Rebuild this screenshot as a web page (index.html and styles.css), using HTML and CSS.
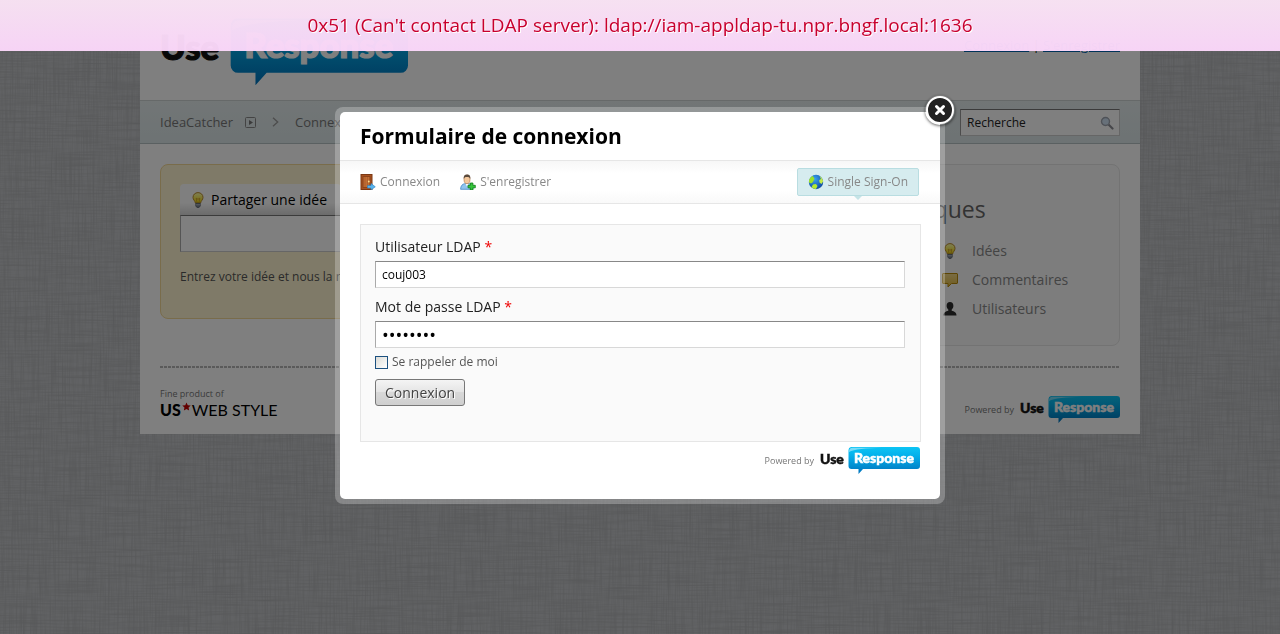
FILE: index.html
```html
<!DOCTYPE html>
<html lang="fr">
  <head>
    <meta charset="utf-8">
    <title>Formulaire de connexion</title>
    <link rel="stylesheet" href="styles.css">
  </head>
  <body>
    <!-- shared shapes -->
    <svg class="sprite" aria-hidden="true">
      <defs>
        <linearGradient id="bubble" x1="0" y1="0" x2="0" y2="1">
          <stop offset="0" stop-color="#0cc4f4"/>
          <stop offset="0.3" stop-color="#04b2ec"/>
          <stop offset="1" stop-color="#0072bc"/>
        </linearGradient>
        <linearGradient id="glass" x1="0" y1="0" x2="0" y2="1">
          <stop offset="0" stop-color="#ffffb0"/>
          <stop offset="1" stop-color="#f0d800"/>
        </linearGradient>
        <linearGradient id="note" x1="0" y1="0" x2="0" y2="1">
          <stop offset="0" stop-color="#f3d98a"/>
          <stop offset="1" stop-color="#e2b93c"/>
        </linearGradient>
        <radialGradient id="sea" cx="0.4" cy="0.3" r="0.8">
          <stop offset="0" stop-color="#3aa4f0"/>
          <stop offset="1" stop-color="#0a3f98"/>
        </radialGradient>
        <filter id="weave-x" x="0" y="0" width="100%" height="100%">
          <feTurbulence type="fractalNoise" baseFrequency="0.02 0.6" numOctaves="3" seed="3"/>
          <feColorMatrix values="0 0 0 0 0  0 0 0 0 0  0 0 0 0 0  1.6 0 0 0 -0.6"/>
        </filter>
        <filter id="weave-y" x="0" y="0" width="100%" height="100%">
          <feTurbulence type="fractalNoise" baseFrequency="0.6 0.02" numOctaves="3" seed="8"/>
          <feColorMatrix values="0 0 0 0 0  0 0 0 0 0  0 0 0 0 0  1.6 0 0 0 -0.6"/>
        </filter>
      </defs>
      <symbol id="logo-bubble" viewBox="0 0 100 28">
        <path d="M31 0H97a3 3 0 0 1 3 3V19a3 3 0 0 1-3 3H43L38.500 27V22H31.500a3 3 0 0 1-3-3V3a3 3 0 0 1 2.500-3z" fill="url(#bubble)"/>
        <path d="M29 5C29 2 30 .7 33 .7H62C46 1 34 2 29 5z" fill="#fff" opacity=".45"/>
      </symbol>
      <symbol id="bulb" viewBox="0 0 16 16">
        <path d="M8 .6C5 .6 3 2.800 3 5.400c0 2.300 2 3.400 2.400 5.600h5.200C11 8.800 13 7.700 13 5.400 13 2.800 11 .6 8 .6z" fill="url(#glass)" stroke="#b98a2c"/>
        <path d="M7 10.500L6.200 6.200 8 7.300l1.800-1.100L9 10.500" fill="none" stroke="#c9952a" stroke-width=".8"/>
        <path d="M5.700 11.300h4.600v2.600L9 15.600H7L5.700 13.900z" fill="#77808c" stroke="#444b55" stroke-width=".6"/>
        <path d="M5.700 12.800h4.600" stroke="#d5d9df" stroke-width=".7"/>
      </symbol>
    </svg>

    <svg class="weave" aria-hidden="true">
      <rect width="100%" height="100%" filter="url(#weave-x)"/>
      <rect width="100%" height="100%" filter="url(#weave-y)"/>
    </svg>

    <div class="page">
      <div class="header">
        <svg class="logo logo-big" viewBox="0 0 100 28">
          <use href="#logo-bubble"/>
          <text class="logo-use" x="0" y="17">Use</text>
          <text class="logo-response" x="64" y="16" text-anchor="middle">Response</text>
        </svg>
        <div class="account">
          <a href="#">Connexion</a> | <a href="#">S'enregistrer</a>
        </div>
      </div>

      <div class="crumbs">
        <a href="#">IdeaCatcher</a>
        <svg class="crumb-menu" viewBox="0 0 11 11"><rect x=".5" y=".5" width="10" height="10" rx="1" fill="none" stroke="#888"/><path d="M4 3l4 2.500L4 8z" fill="#777"/></svg>
        <svg class="crumb-arrow" viewBox="0 0 7 10"><path d="M1 .7L5.700 5 1 9.300" fill="none" stroke="#999" stroke-width="1.300"/></svg>
        <span>Connexion</span>
        <form class="search">
          <input type="text" value="Recherche" aria-label="Recherche">
          <svg viewBox="0 0 14 14"><path d="M8.500 8.500L12.500 12.500" stroke="#8c8c94" stroke-width="2.200" stroke-linecap="round"/><circle cx="5.500" cy="5.500" r="4" fill="#cfe0f2" stroke="#9fa5b0" stroke-width="1.400"/></svg>
        </form>
      </div>

      <div class="content">
        <div class="share">
          <div class="share-tab"><svg><use href="#bulb"/></svg>Partager une idée</div>
          <input type="text" class="share-input" aria-label="Partager une idée">
          <p>Entrez votre idée et nous la rechercherons</p>
        </div>
        <div class="stats">
          <h2>Statistiques</h2>
          <ul>
            <li><svg viewBox="0 0 16 16"><use href="#bulb"/></svg>Idées</li>
            <li><svg viewBox="0 0 16 16"><path d="M1 1.500h14a.6.6 0 0 1 .5.500v9a.6.6 0 0 1-.5.500H9.500L6 15v-3.500H1a.6.6 0 0 1-.5-.5V2a.6.6 0 0 1 .5-.5z" fill="url(#note)" stroke="#b98a08"/></svg>Commentaires</li>
            <li><svg viewBox="0 0 16 16"><path d="M8 1C5.800 1 4.600 2.600 4.600 4.700c0 1.800.8 3 1.700 3.800v1.300C3.800 10.500 1.500 11.500 1.500 14.600h13c0-3.100-2.300-4.100-4.800-4.800V8.500c.9-.8 1.700-2 1.700-3.800C11.400 2.600 10.200 1 8 1z" fill="#2c2c2c"/></svg>Utilisateurs</li>
          </ul>
        </div>
      </div>

      <div class="footer">
        <div class="maker">
          <span>Fine product of</span>
          <div class="maker-name"><b>US</b><svg viewBox="0 0 10 10"><path d="M5 .5l1.400 3 3.300.4-2.400 2.200.6 3.300L5 7.800 2.100 9.400l.6-3.300L.3 3.900l3.300-.4z" fill="#c40000"/></svg>WEB STYLE</div>
        </div>
        <div class="powered">Powered by
          <svg class="logo" viewBox="0 0 100 28">
            <use href="#logo-bubble"/>
            <text class="logo-use" x="0" y="17">Use</text>
            <text class="logo-response" x="64" y="16" text-anchor="middle">Response</text>
          </svg>
        </div>
      </div>
    </div>

    <div class="overlay"></div>

    <div class="modal">
      <button type="button" class="modal-close" aria-label="Fermer"><svg viewBox="0 0 30 30"><circle cx="15" cy="15" r="13" fill="#222" stroke="#fff" stroke-width="2"/><path d="M11.500 11.500l7 7M18.500 11.500l-7 7" stroke="#fff" stroke-width="3" stroke-linecap="round"/></svg></button>
      <div class="modal-body">
        <h1>Formulaire de connexion</h1>
        <div class="tabs">
          <a href="#"><svg viewBox="0 0 16 16"><rect x="1" y=".5" width="11" height="15" fill="#a85220" stroke="#7c3813"/><rect x="3" y="2.500" width="7" height="11" fill="#c06f35" stroke="#8c431a"/><path d="M5 3v10M7.500 3v10" stroke="#a9582a" stroke-width=".7"/><circle cx="8.800" cy="7.500" r=".9" fill="#ffe08a"/><path d="M7.500 11.500h3.500V9.500l4.300 3.300L11 16v-2H7.500z" fill="#58b4ee" stroke="#2a7fc0" stroke-width=".6"/></svg>Connexion</a>
          <a href="#"><svg viewBox="0 0 16 16"><path d="M.6 15.300c0-3.600 2-5.300 4-5.600h5c2 .3 3.400 2 3.400 5.600z" fill="#8fc3ee" stroke="#3f86c4" stroke-width=".8"/><path d="M5.500 9.700L7 12.500l1.700-2.800z" fill="#fff"/><ellipse cx="7" cy="5.400" rx="3" ry="4.300" fill="#f3c79b" stroke="#a9703f" stroke-width=".6"/><path d="M3.800 5C3.300 1.800 4.600.4 7 .4s3.800 1.300 3.200 4.600C9.700 3.400 9 3 7 3S4.300 3.400 3.800 5z" fill="#5b4a3c"/><path d="M10.300 9h2.600v2.300h2.400v2.500h-2.400V16h-2.600v-2.200H8v-2.500h2.300z" fill="#35c63a" stroke="#0f7a18" stroke-width=".8"/></svg>S'enregistrer</a>
          <a href="#" class="sso"><svg viewBox="0 0 16 16"><circle cx="8" cy="8" r="7.200" fill="url(#sea)"/><path d="M1 6C2 3.800 3.500 2.500 4.800 2L6.500 4.500 5.500 7 4.500 8.500 3 9.500 1 8.500z" fill="#9be02c"/><path d="M5 10.500l3-.5 1.500 2-1.500 3C6 15 4.500 14.200 3.600 13z" fill="#b4ea30"/><path d="M11.500 2c2 1.200 3.300 3 3.600 5.500L13.500 10l-2-1.500-.3-2.500L13 5z" fill="#c4ec48"/></svg>Single Sign-On</a>
        </div>
        <form class="login">
          <label for="login">Utilisateur LDAP <em>*</em></label>
          <input type="text" id="login" value="couj003">
          <label for="password">Mot de passe LDAP <em>*</em></label>
          <input type="password" id="password" value="password">
          <div class="remember">
            <input type="checkbox" id="remember">
            <label for="remember">Se rappeler de moi</label>
          </div>
          <button type="submit">Connexion</button>
        </form>
        <div class="powered">Powered by
          <svg class="logo" viewBox="0 0 100 28">
            <use href="#logo-bubble"/>
            <text class="logo-use" x="0" y="17">Use</text>
            <text class="logo-response" x="64" y="16" text-anchor="middle">Response</text>
          </svg>
        </div>
      </div>
    </div>

    <div class="message" role="alert">0x51 (Can't contact LDAP server): ldap://iam-appldap-tu.npr.bngf.local:1636</div>
  </body>
</html>
```

FILE: styles.css
```css
* {
  box-sizing: border-box;
}
body {
  margin: 0;
  min-height: 100vh;
  background: #c3c5c8;
  color: #555;
  font: 13px/18px "Trebuchet MS", "Open Sans", sans-serif;
}
h1, h2, p, ul {
  margin: 0;
  padding: 0;
}
ul {
  list-style-type: none;
}
input, button {
  font: inherit;
}
.sprite {
  position: absolute;
  width: 0;
  height: 0;
}
.weave {
  position: fixed;
  top: 0;
  left: 0;
  width: 100%;
  height: 100%;
  opacity: 0.1;
}

/* page */
.page {
  position: relative;
  max-width: 1000px;
  margin: 0 auto;
  background: #fff;
}
.header {
  display: flex;
  justify-content: space-between;
  align-items: flex-start;
  height: 100px;
  padding: 18px 20px 0;
}
.logo {
  width: 100px;
  height: 28px;
}
.logo-big {
  width: 248px;
  height: 70px;
}
.logo-use,
.logo-response {
  font-family: Lato, sans-serif;
  font-size: 14px;
  font-weight: 900;
  stroke-width: 0.5px;
}
.logo-use {
  fill: #111;
  stroke: #111;
}
.logo-response {
  fill: #fff;
  stroke: #fff;
}
.account {
  padding-top: 18px;
  color: #000;
}
.account a {
  color: #0066b3;
}
.crumbs {
  display: flex;
  align-items: center;
  height: 44px;
  padding: 0 20px;
  border-top: 1px solid #ccd2d3;
  border-bottom: 1px solid #b5c0c2;
  background: linear-gradient(#e4eced, #dbe6e8);
}
.crumbs a,
.crumbs span {
  color: #777;
  text-decoration: none;
}
.crumb-menu {
  width: 11px;
  height: 11px;
  margin: 0 16px 0 12px;
}
.crumb-arrow {
  width: 7px;
  height: 10px;
  margin-right: 16px;
}
.search {
  position: relative;
  margin-left: auto;
}
.search input {
  display: block;
  width: 160px;
  height: 27px;
  padding: 0 28px 0 6px;
  border: 1px solid #ccc;
  border-top-color: #777;
  border-left-color: #999;
  background: #fff;
  color: #222;
  font-size: 12px;
}
.search svg {
  position: absolute;
  top: 7px;
  right: 6px;
  width: 14px;
  height: 14px;
}
.content {
  display: flex;
  align-items: flex-start;
  gap: 20px;
  padding: 20px;
}
.share {
  flex: 1;
  height: 155px;
  padding: 19px;
  border: 1px solid #f3d896;
  border-radius: 8px;
  background: #fff5d0;
}
.share-tab {
  display: inline-flex;
  align-items: center;
  height: 31px;
  padding: 0 14px 0 10px;
  border-radius: 4px 4px 0 0;
  background: linear-gradient(#fff 60%, #d8d8d8);
  color: #000;
  font-size: 14px;
}
.share-tab svg {
  width: 16px;
  height: 16px;
  margin-right: 5px;
}
.share-input {
  display: block;
  width: 100%;
  height: 37px;
  border: 1px solid #ccc;
  border-top-color: #777;
  border-left-color: #aaa;
  background: #fff;
}
.share p {
  padding-top: 16px;
  font-size: 12px;
}
.stats {
  width: 280px;
  height: 182px;
  padding: 30px 20px;
  border: 1px solid #e6e6e6;
  border-radius: 8px;
  background: #fafafa;
}
.stats h2 {
  color: #666;
  font-size: 23px;
  font-weight: normal;
  line-height: 28px;
}
.stats ul {
  padding: 13px 0 0 81px;
}
.stats li {
  display: flex;
  align-items: center;
  height: 29px;
  color: #888;
  font-size: 14px;
}
.stats li svg {
  width: 16px;
  height: 16px;
  margin-right: 14px;
}
.footer {
  display: flex;
  justify-content: space-between;
  align-items: flex-start;
  height: 68px;
  margin: 0 20px;
  padding-top: 20px;
  background: repeating-linear-gradient(to right, #b4b4b4 0, #b4b4b4 3px, #fff 3px, #fff 4px) 0 0 / 100% 2px no-repeat;
  font-size: 9px;
}
.maker {
  color: #777;
  line-height: 16px;
}
.maker-name {
  display: flex;
  align-items: center;
  color: #000;
  font: 16px/16px Lato, sans-serif;
}
.maker-name b {
  font-weight: 900;
}
.maker-name svg {
  align-self: flex-start;
  width: 9px;
  height: 9px;
  margin: 0 1px;
}
.powered {
  display: flex;
  justify-content: flex-end;
  align-items: center;
  gap: 6px;
  color: #777;
  font-size: 9px;
  line-height: 12px;
}
.footer .powered {
  padding-top: 10px;
}
.overlay {
  position: fixed;
  top: 0;
  right: 0;
  bottom: 0;
  left: 0;
  background: rgba(0,0,0,0.5);
}

/* login window */
.modal {
  position: fixed;
  top: 107px;
  left: 50%;
  width: 610px;
  padding: 5px;
  border-radius: 8px;
  background: rgba(255,255,255,0.25);
  transform: translateX(-50%);
}
.modal-close {
  position: absolute;
  top: -12px;
  right: -10px;
  width: 30px;
  height: 30px;
  padding: 0;
  border: 0;
  border-radius: 50%;
  background: none;
  box-shadow: 0 1px 3px rgba(0,0,0,0.6);
  cursor: pointer;
}
.modal-close svg {
  display: block;
}
.modal-body {
  padding-bottom: 24px;
  border-radius: 5px;
  background: #fff;
}
.modal h1 {
  padding: 0 20px;
  color: #000;
  font-size: 21px;
  line-height: 48px;
}
.tabs {
  display: flex;
  align-items: center;
  gap: 20px;
  height: 44px;
  padding: 0 20px;
  border: 1px solid #e6e6e6;
  border-width: 1px 0;
  background: linear-gradient(#f7f7f7, #fff 30%, #fff 70%, #f9f9f9);
}
.tabs a {
  display: flex;
  align-items: center;
  gap: 4px;
  color: #888;
  font-size: 12px;
  text-decoration: none;
}
.tabs a svg {
  width: 16px;
  height: 16px;
}
.tabs .sso {
  position: relative;
  height: 28px;
  margin: 0 1px 0 auto;
  padding: 0 10px;
  border: 1px solid #b9dde1;
  border-radius: 2px;
  background: #d6ecef;
}
.sso:after {
  content: "";
  position: absolute;
  top: 27px;
  left: 50%;
  margin-left: -4px;
  border: 4px solid transparent;
  border-top-color: #c5e4e7;
  border-bottom: 0;
}
.login {
  height: 218px;
  margin: 20px 19px 5px 20px;
  padding: 12px 15px 12px 14px;
  border: 1px solid #e6e6e6;
  background: #fafafa;
}
.login > label {
  display: block;
  margin-bottom: 4px;
  color: #222;
  font-size: 14px;
  line-height: 20px;
}
.login em {
  color: #e00;
  font-style: normal;
}
.login > input {
  display: block;
  width: 100%;
  height: 27px;
  margin-bottom: 9px;
  padding: 0 6px;
  border: 1px solid #d8d8d8;
  border-top-color: #888;
  border-left-color: #aaa;
  background: #fff;
  color: #000;
  font-size: 12px;
}
.login > input[type="password"] {
  font-size: 18px;
}
.remember {
  display: flex;
  align-items: center;
  gap: 4px;
  margin-top: -4px;
  font-size: 12px;
}
.remember input {
  appearance: none;
  width: 13px;
  height: 13px;
  margin: 0;
  border: 1px solid #1c5180;
  background: linear-gradient(135deg, #dcdcd7, #fff);
}
.login button {
  display: block;
  height: 27px;
  margin-top: 8px;
  padding: 0 9px;
  border: 1px solid #777;
  border-radius: 3px;
  background: linear-gradient(#f4f4f4, #e4e4e4 50%, #d8d8d8 50%, #cfcfcf);
  color: #444;
  font-size: 14px;
  line-height: 24px;
  text-shadow: 1px 1px 0 #fff;
}
.modal .powered {
  padding-right: 20px;
}

/* error bar */
.message {
  position: fixed;
  top: 0;
  right: 0;
  left: 0;
  height: 51px;
  background: linear-gradient(rgba(250,228,245,0.97), rgba(251,215,250,0.97));
  color: #c8002d;
  font-size: 19px;
  line-height: 51px;
  text-align: center;
  text-shadow: 1px 1px 0 #fff;
}
```
